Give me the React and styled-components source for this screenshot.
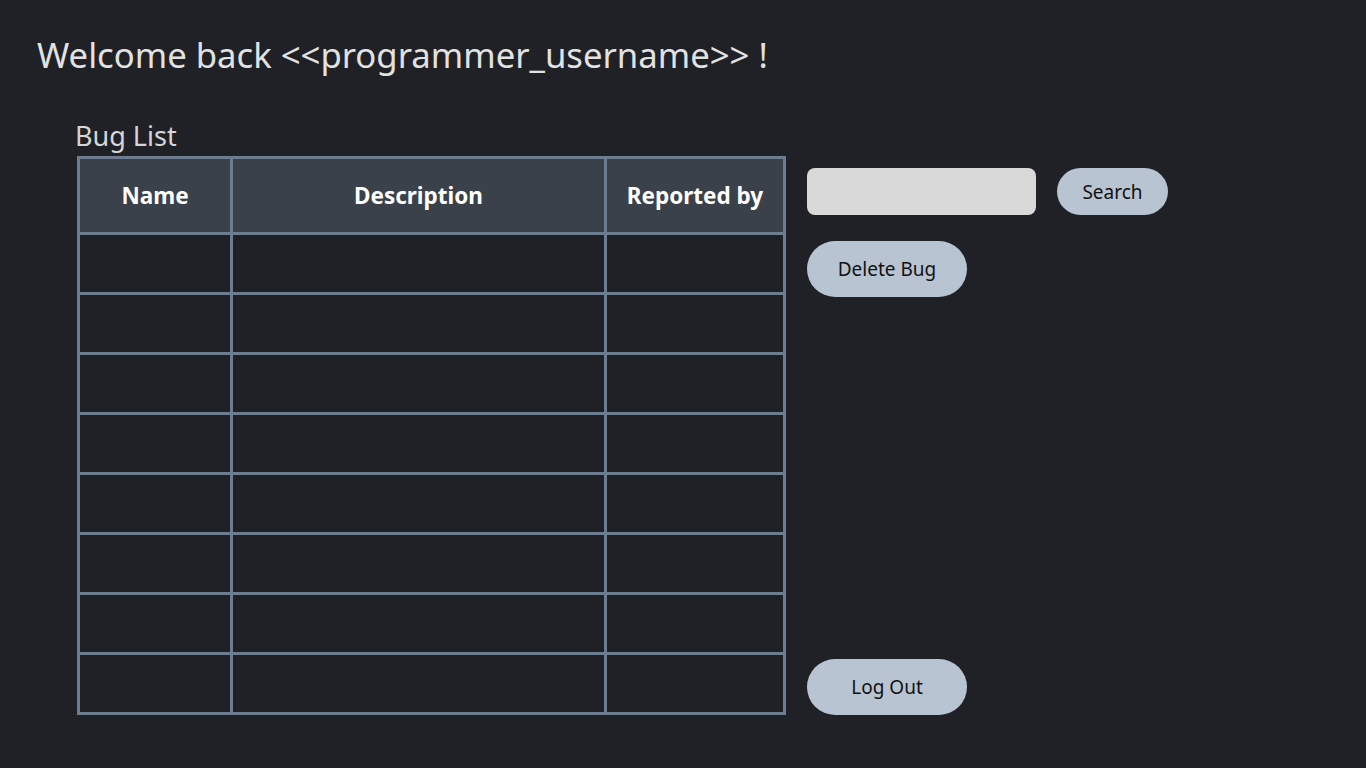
import React from "react";
import styled, { createGlobalStyle } from "styled-components";

const GlobalStyle = createGlobalStyle`
  html, body {
    margin: 0;
    padding: 0;
    background: #1f2126;
  }
  body {
    font-family: "Noto Sans", "Open Sans", sans-serif;
  }
`;

const rows = [1, 2, 3, 4, 5, 6, 7, 8];

export default function App() {
  return (
    <Page>
      <GlobalStyle />
      <Title>Welcome back &lt;&lt;programmer_username&gt;&gt; !</Title>
      <Main>
        <ListColumn>
          <ListLabel>Bug List</ListLabel>
          <BugGrid>
            <HeadCell>Name</HeadCell>
            <HeadCell>Description</HeadCell>
            <HeadCell>Reported by</HeadCell>
            {rows.map((r) => (
              <React.Fragment key={r}>
                <BodyCell />
                <BodyCell />
                <BodyCell />
              </React.Fragment>
            ))}
          </BugGrid>
        </ListColumn>
        <Side>
          <SearchRow>
            <SearchInput type="text" />
            <PillButton small>Search</PillButton>
          </SearchRow>
          <PillButton>Delete Bug</PillButton>
          <Bottom>
            <PillButton>Log Out</PillButton>
          </Bottom>
        </Side>
      </Main>
    </Page>
  );
}

const Page = styled.div`
  min-height: 768px;
  box-sizing: border-box;
  padding: 33px 0 0 37px;
  background: #1f2126;
`;

const Title = styled.h1`
  margin: 0;
  font-size: 34.7px;
  font-weight: 400;
  line-height: 44px;
  color: #e2e2e2;
`;

const Main = styled.div`
  display: flex;
  gap: 21px;
  margin-top: 41px;
  padding-left: 38px;
`;

const ListColumn = styled.div`
  display: flex;
  flex-direction: column;
`;

const ListLabel = styled.div`
  font-size: 27px;
  line-height: 36px;
  color: #d6d6d6;
  margin-bottom: 2px;
`;

const BugGrid = styled.div`
  display: grid;
  grid-template-columns: 150px 371px 176px;
  grid-template-rows: 73px repeat(8, 57px);
  gap: 3px;
  padding: 3px;
  margin-left: 2px;
  background: #6c7d92;
`;

const HeadCell = styled.div`
  background: #3a414b;
  color: #ffffff;
  font-weight: 700;
  font-size: 22.5px;
  display: flex;
  align-items: center;
  justify-content: center;
`;

const BodyCell = styled.div`
  background: #1f2126;
`;

const Side = styled.div`
  display: flex;
  flex-direction: column;
  align-items: flex-start;
  gap: 26px;
  padding-top: 50px;
`;

const SearchRow = styled.div`
  display: flex;
  align-items: center;
  gap: 21px;
`;

const SearchInput = styled.input`
  width: 229px;
  height: 47px;
  box-sizing: border-box;
  border: none;
  border-radius: 8px;
  background: #d9d9d9;
  outline: none;
`;

const PillButton = styled.button`
  width: ${(p) => (p.small ? "111px" : "160px")};
  height: ${(p) => (p.small ? "47px" : "56px")};
  border: none;
  border-radius: 28px;
  background: #b8c4d2;
  color: #111111;
  font-family: "Noto Sans", "Open Sans", sans-serif;
  font-size: 19px;
  padding: 0;
`;

const Bottom = styled.div`
  margin-top: auto;
`;
